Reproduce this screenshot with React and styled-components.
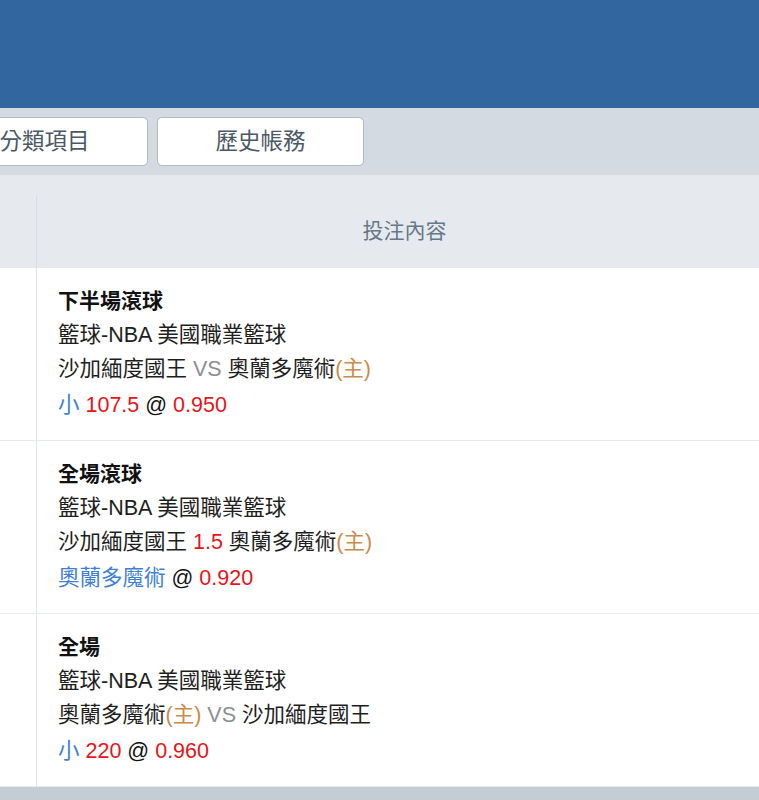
import React from 'react';
import styled, { createGlobalStyle } from 'styled-components';

const GlobalStyle = createGlobalStyle`
  html, body {
    margin: 0;
    padding: 0;
    background: #c5cdd4;
    overflow: hidden;
  }
  body {
    font-family: Arial, 'Liberation Sans', 'Noto Sans CJK TC', sans-serif;
  }
`

const Page = styled.div`
  width: 759px;
  height: 800px;
  overflow: hidden;
  background: #c5cdd4;
`

const Header = styled.div`
  height: 108px;
  background-color: #32669f;
`

const TabBar = styled.div`
  height: 67px;
  box-sizing: border-box;
  padding: 9px 0;
  background-color: #d3dae2;
  display: flex;
  gap: 9px;
  margin-left: -59px;
`

const TabButton = styled.div`
  width: 207px;
  height: 49px;
  box-sizing: border-box;
  padding-bottom: 5px;
  background: #fff;
  border: 1px solid #b3bac3;
  border-radius: 5px;
  display: flex;
  align-items: center;
  justify-content: center;
  font-size: 22.5px;
  color: #4b5866;
  flex-shrink: 0;
`

const Table = styled.div`
  width: 772px;
  background: #fff;
`

const HeadRow = styled.div`
  display: grid;
  grid-template-columns: 37px 1fr;
  height: 93px;
  background-color: #e6eaef;
`

const HeadSide = styled.div`
  margin-top: 20px;
  border-right: 1px solid #d8dee5;
`

const HeadCell = styled.div`
  display: flex;
  align-items: center;
  justify-content: center;
  padding-top: 14px;
  font-size: 21px;
  color: #66778a;
`

const Row = styled.div`
  display: grid;
  grid-template-columns: 37px 1fr;
  border-bottom: 1px solid #e8ebee;
`

const Side = styled.div`
  border-right: 1px solid #dfe4ea;
`

const Cell = styled.div`
  padding: 16px 21px 18px;
  font-size: 21.5px;
  color: #1e1e1e;
`

const Line = styled.div`
  line-height: 34px;
  height: 34px;
  white-space: nowrap;
  ${p => p.$last && 'margin-top: 2px;'}
`

const Title = styled(Line)`
  font-weight: bold;
  font-size: 21px;
  color: #111;
`

const Tone = styled.span`
  color: ${p => ({ vs: '#8a8f94', home: '#c98b4c', blue: '#3f7fd8', red: '#e8131b', at: '#111' }[p.$c])};
`

const Footer = styled.div`
  height: 14px;
  background: #c5cdd4;
`

const bets = [
  {
    title: '下半場滾球',
    league: '籃球-NBA 美國職業籃球',
    match: <>沙加緬度國王 <Tone $c="vs">VS</Tone> 奧蘭多魔術<Tone $c="home">(主)</Tone></>,
    pick: <><Tone $c="blue">小</Tone> <Tone $c="red">107.5</Tone> <Tone $c="at">@</Tone> <Tone $c="red">0.950</Tone></>,
  },
  {
    title: '全場滾球',
    league: '籃球-NBA 美國職業籃球',
    match: <>沙加緬度國王 <Tone $c="red">1.5</Tone> 奧蘭多魔術<Tone $c="home">(主)</Tone></>,
    pick: <><Tone $c="blue">奧蘭多魔術</Tone> <Tone $c="at">@</Tone> <Tone $c="red">0.920</Tone></>,
  },
  {
    title: '全場',
    league: '籃球-NBA 美國職業籃球',
    match: <>奧蘭多魔術<Tone $c="home">(主)</Tone> <Tone $c="vs">VS</Tone> 沙加緬度國王</>,
    pick: <><Tone $c="blue">小</Tone> <Tone $c="red">220</Tone> <Tone $c="at">@</Tone> <Tone $c="red">0.960</Tone></>,
  },
];

export default function App() {
  return (
    <Page>
      <GlobalStyle />
      <Header />
      <TabBar>
        <TabButton>分類項目</TabButton>
        <TabButton>歷史帳務</TabButton>
      </TabBar>
      <Table>
        <HeadRow>
          <HeadSide />
          <HeadCell>投注內容</HeadCell>
        </HeadRow>
        {bets.map((b, i) => (
          <Row key={i}>
            <Side />
            <Cell>
              <Title>{b.title}</Title>
              <Line>{b.league}</Line>
              <Line>{b.match}</Line>
              <Line $last>{b.pick}</Line>
            </Cell>
          </Row>
        ))}
      </Table>
      <Footer />
    </Page>
  );
}
